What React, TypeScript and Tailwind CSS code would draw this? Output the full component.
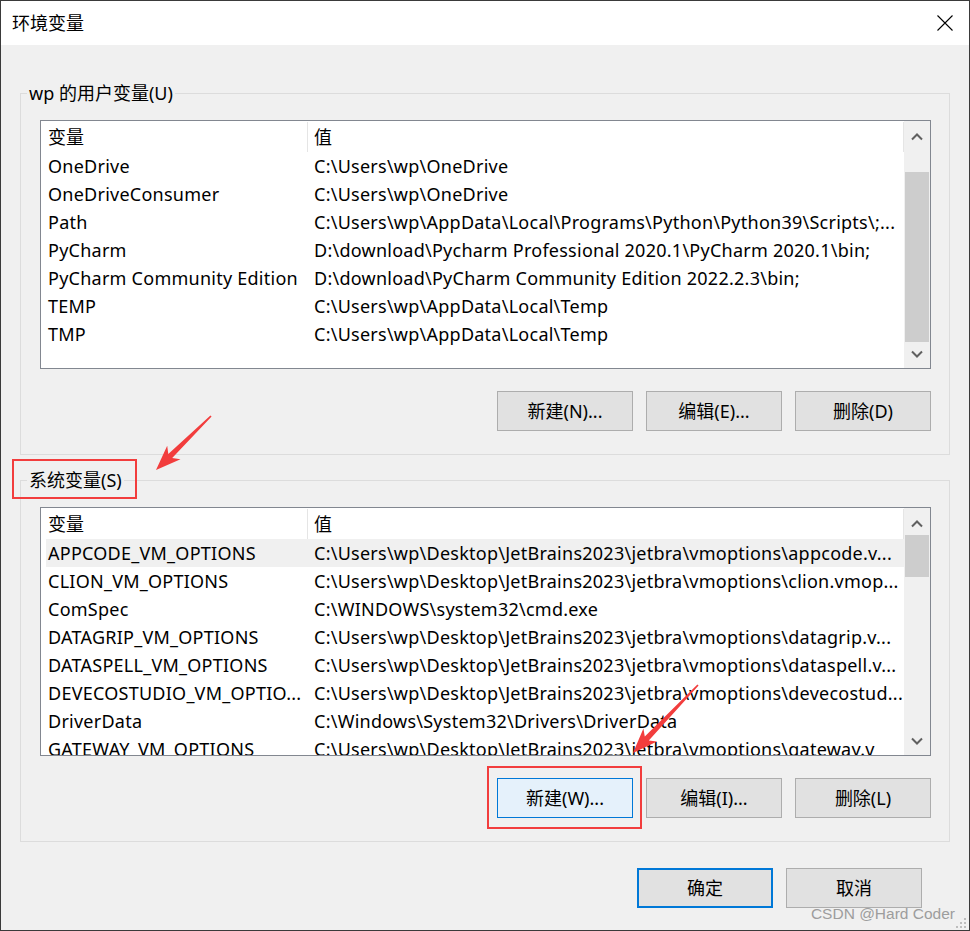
import React from "react";

type Row = [string, string];

const userVars: Row[] = [
  ["OneDrive", "C:\\Users\\wp\\OneDrive"],
  ["OneDriveConsumer", "C:\\Users\\wp\\OneDrive"],
  ["Path", "C:\\Users\\wp\\AppData\\Local\\Programs\\Python\\Python39\\Scripts\\;..."],
  ["PyCharm", "D:\\download\\Pycharm Professional 2020.1\\PyCharm 2020.1\\bin;"],
  ["PyCharm Community Edition", "D:\\download\\PyCharm Community Edition 2022.2.3\\bin;"],
  ["TEMP", "C:\\Users\\wp\\AppData\\Local\\Temp"],
  ["TMP", "C:\\Users\\wp\\AppData\\Local\\Temp"],
];

const sysVars: Row[] = [
  ["APPCODE_VM_OPTIONS", "C:\\Users\\wp\\Desktop\\JetBrains2023\\jetbra\\vmoptions\\appcode.v..."],
  ["CLION_VM_OPTIONS", "C:\\Users\\wp\\Desktop\\JetBrains2023\\jetbra\\vmoptions\\clion.vmop..."],
  ["ComSpec", "C:\\WINDOWS\\system32\\cmd.exe"],
  ["DATAGRIP_VM_OPTIONS", "C:\\Users\\wp\\Desktop\\JetBrains2023\\jetbra\\vmoptions\\datagrip.v..."],
  ["DATASPELL_VM_OPTIONS", "C:\\Users\\wp\\Desktop\\JetBrains2023\\jetbra\\vmoptions\\dataspell.v..."],
  ["DEVECOSTUDIO_VM_OPTIO...", "C:\\Users\\wp\\Desktop\\JetBrains2023\\jetbra\\vmoptions\\devecostud..."],
  ["DriverData", "C:\\Windows\\System32\\Drivers\\DriverData"],
  ["GATEWAY_VM_OPTIONS", "C:\\Users\\wp\\Desktop\\JetBrains2023\\jetbra\\vmoptions\\gateway.v"],
];

function Chevron({ down }: { down?: boolean }) {
  return (
    <svg width="12" height="8" viewBox="0 0 12 8">
      <path
        d={down ? "M1 1.5 L6 6.5 L11 1.5" : "M1 6.5 L6 1.5 L11 6.5"}
        fill="none"
        stroke="#606060"
        strokeWidth="2"
      />
    </svg>
  );
}

function VarList({
  rows,
  highlight,
  thumbClass,
}: {
  rows: Row[];
  highlight?: number;
  thumbClass: string;
}) {
  return (
    <div className="h-[249px] border border-[#828790] bg-white flex overflow-hidden">
      <div className="flex-1 min-w-0 overflow-hidden">
        <div className="flex h-[31px]">
          <div className="w-[267px] shrink-0 pl-[7px] border-r border-[#e5e5e5] leading-[31px] mt-[1px] h-[30px]">
            变量
          </div>
          <div className="flex-1 pl-[6px] border-r border-[#e5e5e5] leading-[31px] mt-[1px] h-[30px]">
            值
          </div>
        </div>
        {rows.map((r, i) => (
          <div
            key={i}
            className={
              "flex h-[28px] leading-[28px] ml-[5px] whitespace-nowrap tracking-[0.25px] " +
              (i === highlight ? "bg-[#f0f0f0]" : "")
            }
          >
            <div className="w-[261px] shrink-0 pl-[2px] overflow-hidden">{r[0]}</div>
            <div className="flex-1 min-w-0 pl-[7px] overflow-hidden">{r[1]}</div>
          </div>
        ))}
      </div>
      <div className="w-[26px] shrink-0 bg-[#f0f0f0] flex flex-col">
        <div className="h-[27px] shrink-0 flex justify-center pt-[12px]">
          <Chevron />
        </div>
        <div className={"mx-[1px] bg-[#cdcdcd] shrink-0 " + thumbClass}></div>
        <div className="flex-1 flex justify-center items-end pb-[10px]">
          <Chevron down />
        </div>
      </div>
    </div>
  );
}

function Btn({ label, variant }: { label: string; variant?: "focus" | "default" }) {
  const cls =
    variant === "focus"
      ? "border border-[#0078d7] bg-[#e5f1fb]"
      : variant === "default"
      ? "border-2 border-[#0078d7] bg-[#e1e1e1]"
      : "border border-[#adadad] bg-[#e1e1e1]";
  return (
    <div className={"w-[136px] h-[40px] flex items-center justify-center text-[18px] " + cls}>
      {label}
    </div>
  );
}

function Group({
  title,
  rows,
  highlight,
  thumbClass,
  btns,
  className,
}: {
  title: string;
  rows: Row[];
  highlight?: number;
  thumbClass: string;
  btns: React.ReactNode;
  className?: string;
}) {
  return (
    <fieldset className={"border border-[#dcdcdc] " + (className || "")}>
      <legend className="ml-[6px] px-[2px] h-[26px] leading-[26px] text-[18px]">{title}</legend>
      <div className="pl-[19px] pr-[18px] pt-[14px] pb-[23px]">
        <VarList rows={rows} highlight={highlight} thumbClass={thumbClass} />
        <div className="mt-[22px] flex justify-end gap-[13px]">{btns}</div>
      </div>
    </fieldset>
  );
}

function arrowPoints(sx: number, sy: number, tx: number, ty: number) {
  const dx = tx - sx;
  const dy = ty - sy;
  const L = Math.hypot(dx, dy);
  const ux = dx / L;
  const uy = dy / L;
  const nx = -uy;
  const ny = ux;
  const headLen = 25;
  const headW = 9.5;
  const notch = 5;
  const t0 = 0.8;
  const t1 = 2.8;
  const bx = tx - headLen * ux;
  const by = ty - headLen * uy;
  const mx = tx - (headLen - notch) * ux;
  const my = ty - (headLen - notch) * uy;
  const pts = [
    [sx + t0 * nx, sy + t0 * ny],
    [mx + t1 * nx, my + t1 * ny],
    [bx + headW * nx, by + headW * ny],
    [tx, ty],
    [bx - headW * nx, by - headW * ny],
    [mx - t1 * nx, my - t1 * ny],
    [sx - t0 * nx, sy - t0 * ny],
  ];
  return pts.map((p) => p[0].toFixed(1) + "," + p[1].toFixed(1)).join(" ");
}

export default function App() {
  return (
    <div className="relative w-[970px] h-[931px] border border-[#3a3a3a] bg-[#f0f0f0] overflow-hidden text-black font-['Noto_Sans','Noto_Sans_CJK_SC',sans-serif] text-[18px]">
      <div className="h-[44px] bg-white flex items-center justify-between pl-[11px] pr-[16px]">
        <span className="text-[18px]">环境变量</span>
        <svg width="16" height="16" viewBox="0 0 16 16">
          <path d="M0.5 0.5 L15.5 15.5 M15.5 0.5 L0.5 15.5" stroke="#000" strokeWidth="1.1" />
        </svg>
      </div>
      <div className="pl-[19px] pr-[19px] pt-[35px]">
        <Group
          title="wp 的用户变量(U)"
          rows={userVars}
          thumbClass="mt-[24px] h-[170px]"
          btns={
            <>
              <Btn label="新建(N)..." />
              <Btn label="编辑(E)..." />
              <Btn label="删除(D)" />
            </>
          }
        />
        <Group
          className="mt-[12px]"
          title="系统变量(S)"
          rows={sysVars}
          highlight={0}
          thumbClass="mt-0 h-[42px]"
          btns={
            <>
              <Btn label="新建(W)..." variant="focus" />
              <Btn label="编辑(I)..." />
              <Btn label="删除(L)" />
            </>
          }
        />
        <div className="mt-[26px] flex justify-end gap-[13px] pr-[28px]">
          <Btn label="确定" variant="default" />
          <Btn label="取消" />
        </div>
      </div>

      {/* annotations */}
      <div className="absolute left-[11px] top-[458px] w-[125px] h-[40px] border-2 border-[#f23d3d]"></div>
      <div className="absolute left-[486px] top-[765px] w-[155px] h-[63px] border-2 border-[#f23d3d]"></div>
      <svg
        className="absolute -left-px -top-px pointer-events-none"
        width="970"
        height="931"
        viewBox="0 0 970 931"
      >
        <polygon points={arrowPoints(211, 416, 156, 470)} fill="#f23d3d" />
        <polygon points={arrowPoints(698, 685, 633, 753)} fill="#f23d3d" />
      </svg>

      <div className="absolute right-[14px] bottom-[7px] leading-[18px] text-[15.5px] text-[#9d9d9d] font-['Liberation_Sans',Arial,sans-serif]">
        CSDN @Hard Coder
      </div>
      <svg className="absolute right-[2px] bottom-[1px]" width="12" height="12" viewBox="0 0 12 12">
        <rect x="9" y="1" width="2" height="2" fill="#bdbdbd" />
        <rect x="5" y="5" width="2" height="2" fill="#bdbdbd" />
        <rect x="9" y="5" width="2" height="2" fill="#bdbdbd" />
        <rect x="1" y="9" width="2" height="2" fill="#bdbdbd" />
        <rect x="5" y="9" width="2" height="2" fill="#bdbdbd" />
        <rect x="9" y="9" width="2" height="2" fill="#bdbdbd" />
      </svg>
    </div>
  );
}
